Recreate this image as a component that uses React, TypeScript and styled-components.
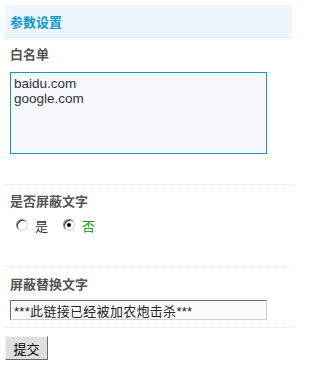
import styled, { createGlobalStyle } from "styled-components";

const GlobalStyle = createGlobalStyle`
  html, body {
    margin: 0;
    width: 293px;
    overflow: hidden;
    background: #fff;
    font-family: "Liberation Sans", "Noto Sans CJK SC", sans-serif;
    font-size: 13px;
    color: #333;
  }
`;

const Page = styled.div`
  width: 287px;
  padding: 5px 1px 0 5px;
`;

const Header = styled.div`
  height: 32px;
  display: flex;
  align-items: center;
  padding-left: 5px;
  background: #eef5fc;
  border-bottom: 1px dotted #cfe0ef;
`;

const Title = styled.h3`
  margin: 0;
  font-size: 13px;
  font-weight: bold;
  color: #0d98c9;
`;

const Section = styled.div<{ $top: number; $bottom: number }>`
  padding: ${(p) => p.$top}px 0 ${(p) => p.$bottom}px 5px;
  border-bottom: 1px dotted #d5e3ef;
`;

const Label = styled.div<{ $gap: number }>`
  font-weight: bold;
  color: #555;
  line-height: 18px;
  margin-bottom: ${(p) => p.$gap}px;
`;

const TextArea = styled.textarea`
  display: block;
  box-sizing: border-box;
  width: 257px;
  height: 82px;
  margin: 0;
  padding: 3px 3px;
  border: 1px solid #0d98c9;
  background: #f5f8fd;
  font-family: "Liberation Sans", "Noto Sans CJK SC", sans-serif;
  font-size: 13.5px;
  line-height: 15px;
  color: #333;
  resize: none;
  outline: none;
`;

const RadioRow = styled.div`
  display: flex;
  align-items: center;
  height: 18px;
  padding-left: 6px;
`;

const Option = styled.label<{ $active?: boolean }>`
  display: flex;
  align-items: center;
  gap: 7px;
  margin-right: 15px;
  color: ${(p) => (p.$active ? "#009900" : "#333")};
`;

const Radio = styled.input.attrs({ type: "radio" })`
  appearance: none;
  margin: 0;
  width: 12px;
  height: 12px;
  border-radius: 50%;
  border: 1px solid;
  border-color: #7a7a7a #d8d4cc #d8d4cc #7a7a7a;
  background: #fff;
  box-shadow: inset 1px 1px 0 #404040;
  position: relative;
  &:checked::after {
    content: "";
    position: absolute;
    left: 3px;
    top: 3px;
    width: 4px;
    height: 4px;
    border-radius: 50%;
    background: #000;
  }
`;

const TextInput = styled.input`
  display: block;
  box-sizing: border-box;
  width: 257px;
  height: 20px;
  margin: 0;
  padding: 0 3px;
  border: 1px solid;
  border-color: #6e6e6e #cfcfcf #cfcfcf #6e6e6e;
  background: #fafafa;
  font-family: "Liberation Sans", "Noto Sans CJK SC", sans-serif;
  font-size: 13px;
  letter-spacing: 0.3px;
  color: #222;
  outline: none;
`;

const Actions = styled.div`
  padding-top: 8px;
`;

const Button = styled.button`
  box-sizing: border-box;
  width: 43px;
  height: 24px;
  padding: 0;
  border: 1px solid;
  border-color: #f4f4f4 #6a6a6a #6a6a6a #f4f4f4;
  background: #dedede;
  font-family: "Liberation Sans", "Noto Sans CJK SC", sans-serif;
  font-size: 13px;
  color: #000;
`;

export default function App() {
  return (
    <Page>
      <GlobalStyle />
      <Header>
        <Title>参数设置</Title>
      </Header>
      <Section $top={8} $bottom={30}>
        <Label $gap={8}>白名单</Label>
        <TextArea defaultValue={"baidu.com\ngoogle.com"} />
      </Section>
      <Section $top={8} $bottom={32}>
        <Label $gap={5}>是否屏蔽文字</Label>
        <RadioRow>
          <Option>
            <Radio name="mask" />是
          </Option>
          <Option $active>
            <Radio name="mask" defaultChecked />否
          </Option>
        </RadioRow>
      </Section>
      <Section $top={9} $bottom={7}>
        <Label $gap={6}>屏蔽替换文字</Label>
        <TextInput defaultValue="***此链接已经被加农炮击杀***" />
      </Section>
      <Actions>
        <Button>提交</Button>
      </Actions>
    </Page>
  );
}
